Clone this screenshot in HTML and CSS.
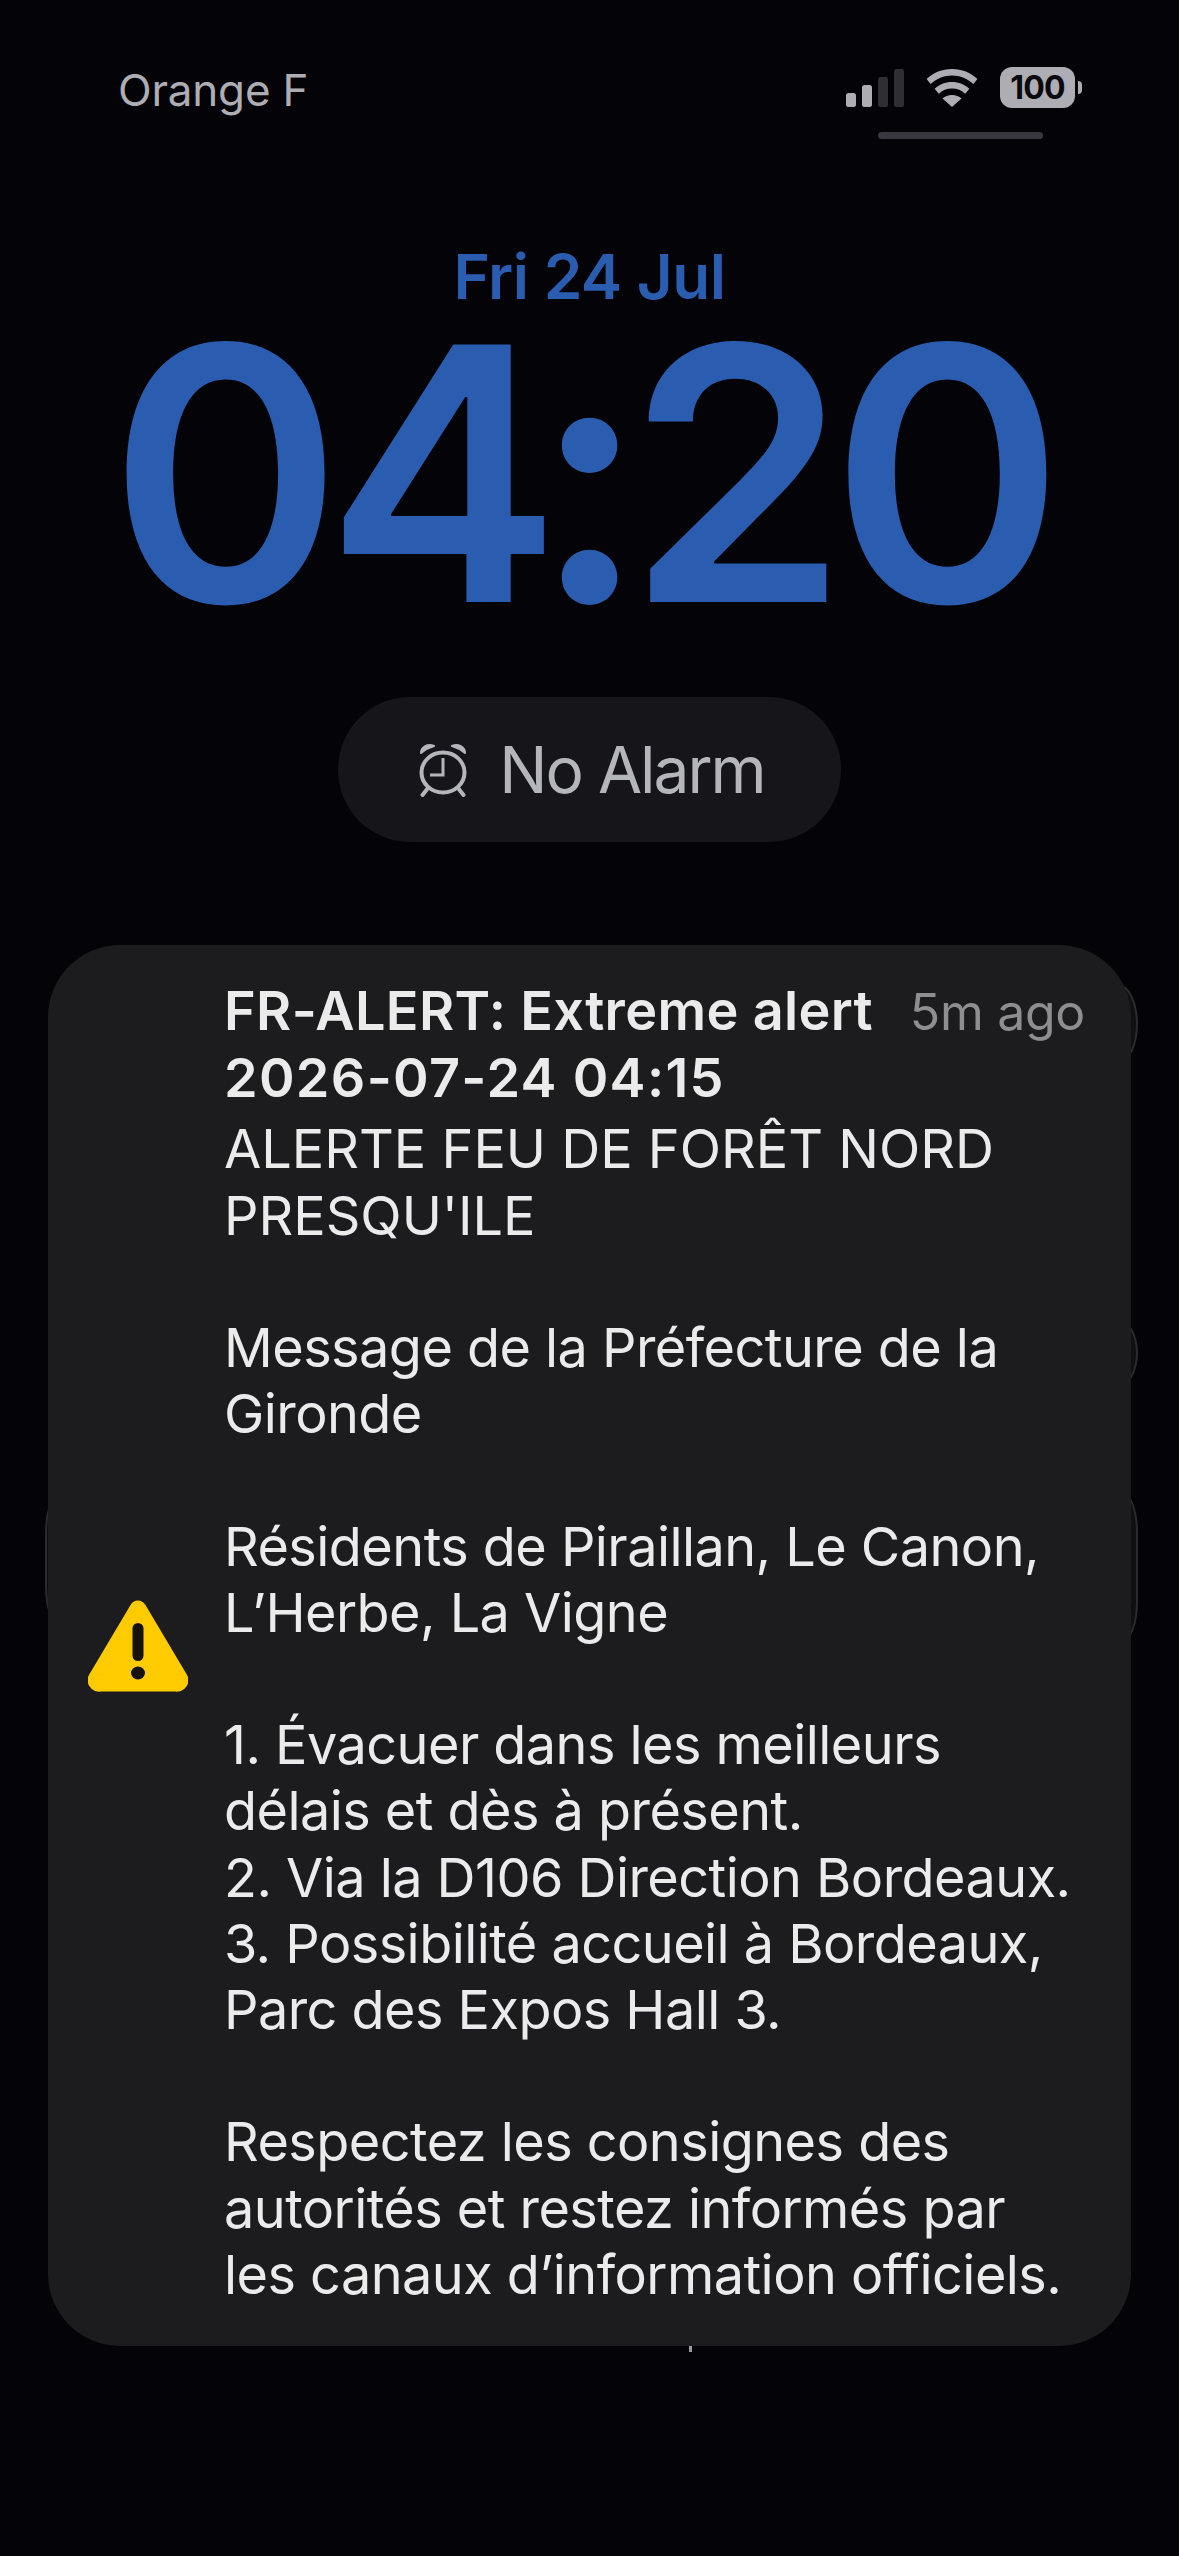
FILE: index.html
```html
<!DOCTYPE html>
<html lang="en">
<head>
<meta charset="utf-8">
<title>Lock screen</title>
<link rel="stylesheet" href="styles.css">
</head>
<body>
<main class="screen">
  <header class="status">
    <span class="carrier">Orange F</span>
    <div class="status-icons">
      <svg class="signal" viewBox="0 0 58 38" width="58" height="38" aria-hidden="true">
        <rect x="0" y="24" width="10" height="14" rx="2.500" fill="#aeadb3"/>
        <rect x="16" y="16" width="10" height="22" rx="2.500" fill="#aeadb3"/>
        <rect x="32" y="8" width="10" height="30" rx="2.500" fill="#2e2e33"/>
        <rect x="48" y="0" width="10" height="38" rx="2.500" fill="#2e2e33"/>
      </svg>
      <svg class="wifi" viewBox="0 0 52 38" width="52" height="38" aria-hidden="true">
        <path d="M26 0C16 0 7.500 3.600 .6 10l4 5C10.400 9.500 17.800 6.400 26 6.400S41.600 9.500 47.400 15l4-5C44.500 3.600 36 0 26 0Z" fill="#aeadb3"/>
        <path d="M26 13c-6.800 0-12.700 2.500-17.400 6.800l4.200 4.900c3.500-3.200 8-5.100 13.200-5.100s9.700 1.900 13.200 5.100l4.200-4.900C38.700 15.500 32.800 13 26 13Z" fill="#aeadb3"/>
        <path d="M26 26c-3.800 0-7 1.300-9.500 3.500L26 38l9.500-8.500C33 27.300 29.800 26 26 26Z" fill="#aeadb3"/>
      </svg>
      <div class="battery"><span class="battery-body">100</span><span class="battery-nub"></span></div>
      <span class="island-line"></span>
    </div>
  </header>

  <section class="clock">
    <div class="date">Fri 24 Jul</div>
    <div class="time">04<span class="colon">:</span>20</div>
    <div class="alarm">
      <svg class="alarm-icon" viewBox="0 0 50 54" width="50" height="54" aria-hidden="true">
        <ellipse cx="25" cy="29.500" rx="21.500" ry="20" fill="none" stroke="#b5b5bc" stroke-width="4"/>
        <path d="M25 15V32H12" fill="none" stroke="#b5b5bc" stroke-width="3"/>
        <path d="M3 10C3 4 10 0 16 3 10.500 4.500 6.500 7 3 10Z" fill="#b5b5bc" stroke="#b5b5bc" stroke-width="2" stroke-linejoin="round"/>
        <path d="M47 10C47 4 40 0 34 3 39.500 4.500 43.500 7 47 10Z" fill="#b5b5bc" stroke="#b5b5bc" stroke-width="2" stroke-linejoin="round"/>
        <path d="M10 45 4.500 52M40 45l5.500 7" fill="none" stroke="#b5b5bc" stroke-width="4" stroke-linecap="round"/>
      </svg>
      <span>No Alarm</span>
    </div>
  </section>

  <section class="stack">
    <span class="ghost ghost-a"></span>
    <span class="ghost ghost-b"></span>
    <span class="ghost ghost-c"></span>
    <span class="ghost ghost-d"></span>
    <article class="notice">
      <div class="notice-icon">
        <svg viewBox="0 0 100 92" width="100" height="92" aria-hidden="true">
          <path d="M50 9 9 78a3 3 0 0 0 3 5h76a3 3 0 0 0 3-5Z" fill="#fecb00" stroke="#fecb00" stroke-width="17" stroke-linejoin="round"/>
          <rect x="44.500" y="23" width="11" height="38" rx="5.500" fill="#14120a"/>
          <ellipse cx="50" cy="73" rx="7" ry="6.500" fill="#14120a"/>
        </svg>
      </div>
      <div class="notice-body">
        <div class="notice-head">
          <strong class="notice-title">FR-ALERT: Extreme alert</strong>
          <span class="notice-age">5m ago</span>
        </div>
        <strong class="notice-title notice-stamp">2026-07-24 04:15</strong>
        <p class="caps">ALERTE FEU DE FORÊT NORD<br>PRESQU'ILE</p>
        <p>Message de la Préfecture de la<br>Gironde</p>
        <p>Résidents de Piraillan, Le Canon,<br>L’Herbe, La Vigne</p>
        <p>1. Évacuer dans les meilleurs<br>délais et dès à présent.<br>2. Via la D106 Direction Bordeaux.<br>3. Possibilité accueil à Bordeaux,<br>Parc des Expos Hall 3.</p>
        <p>Respectez les consignes des<br>autorités et restez informés par<br>les canaux d’information officiels.</p>
      </div>
    </article>
    <span class="peek"></span>
  </section>
</main>
</body>
</html>
```
FILE: styles.css
```css
* { box-sizing: border-box; }
html, body { margin: 0; padding: 0; background: #030308; }
body { font-family: Inter, "Liberation Sans", sans-serif; }
.screen { width: 1179px; height: 2556px; overflow: hidden; display: flex; flex-direction: column; background: #030308; }

.status { display: flex; justify-content: space-between; align-items: flex-start; height: 228px; padding: 66px 97px 0 118px; }
.carrier { font-size: 44px; line-height: 48px; color: #aeadb3; letter-spacing: -.2px; }
.status-icons { position: relative; display: flex; align-items: flex-start; gap: 22px; margin-top: 3px; }
.signal, .wifi { display: block; }
.battery { display: flex; align-items: center; margin-top: -2px; }
.battery-body { width: 75px; height: 41px; border-radius: 12px; background: #aeadb3; color: #0a0a0e; font-size: 32px; font-weight: 700; line-height: 41px; text-align: center; letter-spacing: -.8px; }
.battery-nub { width: 4px; height: 13px; margin-left: 3px; border-radius: 0 7px 7px 0; background: #aeadb3; }
.island-line { position: absolute; left: 32px; top: 63px; width: 165px; height: 7px; border-radius: 4px; background: #39383e; }

.clock { display: flex; flex-direction: column; align-items: center; height: 717px; padding-top: 13px; }
.date { font-size: 62px; line-height: 72px; font-weight: 600; color: #2a5cb0; letter-spacing: -.5px; }
.time { margin: 15px 23px 0 0; font-size: 354px; line-height: 290px; font-weight: 620; color: #2a5cb0; letter-spacing: -17px; white-space: nowrap; }
.colon { margin-left: -11px; letter-spacing: -19px; }
.alarm { display: flex; align-items: center; justify-content: center; gap: 31px; width: 503px; height: 145px; margin-top: 79px; padding-left: 4px; border-radius: 72px; background: #15151a; color: #b5b5bc; font-size: 64px; letter-spacing: -2px; }
.alarm-icon { display: block; flex: none; }

.stack { position: relative; margin: 0 48px; }
.notice { position: relative; display: flex; width: 1083px; height: 1401px; border-radius: 72px; background: #1c1c1e; }
.notice-icon { display: flex; flex: none; align-items: center; width: 176px; padding: 0 0 0 40px; }
.notice-icon svg { display: block; }
.notice-body { flex: 1; padding: 33px 46px 0 0; color: #ebebec; font-size: 54px; line-height: 66.200px; letter-spacing: -.55px; white-space: nowrap; }
.notice-head { display: flex; justify-content: space-between; align-items: baseline; }
.notice-title { display: block; font-weight: 600; letter-spacing: .35px; }
.notice-stamp { margin-bottom: 5px; letter-spacing: 1.3px; }
.notice-age { color: #8d8d92; font-size: 50px; letter-spacing: -.3px; }
.notice-body p { margin: 0 0 66.200px; }
.notice-body .caps { letter-spacing: 0; }

.ghost { position: absolute; border: 2px solid #2b2b2f; background: #101013; }
.ghost-a { right: -7px; top: 39px; width: 40px; height: 80px; border-radius: 50%; }
.ghost-b { right: -7px; top: 374px; width: 40px; height: 68px; border-radius: 50%; }
.ghost-c { right: -7px; top: 547px; width: 40px; height: 150px; border-radius: 16px / 40px; }
.ghost-d { left: -3px; top: 547px; width: 40px; height: 135px; border-radius: 16px / 40px; }
.peek { position: absolute; left: 641px; top: 1401px; width: 3px; height: 6px; background: #9a9a9e; }
```
